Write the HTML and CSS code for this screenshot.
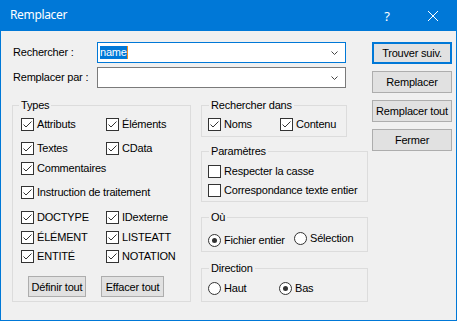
FILE: index.html
```html
<!DOCTYPE html>
<html lang="fr">
<head>
<meta charset="utf-8">
<title>Remplacer</title>
<link rel="stylesheet" href="styles.css">
</head>
<body>
<div class="window">
  <div class="titlebar">
    <div class="title">Remplacer</div>
    <div class="tbtn help">?</div>
    <div class="tbtn close"><svg width="10" height="10" viewBox="0 0 10 10"><path d="M0 0L10 10M10 0L0 10" stroke="#fff" stroke-width="1"/></svg></div>
  </div>
  <div class="content">
    <div class="left">
      <div class="row">
        <span class="lbl">Rechercher :</span>
        <div class="combo focus">
          <span class="value"><span class="sel">name</span><span class="caret"></span></span>
          <svg class="chev" width="7" height="4" viewBox="0 0 7 4"><path d="M0.5 0.5L3.5 3.5L6.5 0.5" fill="none" stroke="#444" stroke-width="1"/></svg>
        </div>
      </div>
      <div class="row">
        <span class="lbl">Remplacer par :</span>
        <div class="combo">
          <span class="value"></span>
          <svg class="chev" width="7" height="4" viewBox="0 0 7 4"><path d="M0.5 0.5L3.5 3.5L6.5 0.5" fill="none" stroke="#444" stroke-width="1"/></svg>
        </div>
      </div>
      <div class="groups">
        <fieldset class="grp types">
          <legend>Types</legend>
          <div class="trow g6">
            <label class="opt"><span class="cb"><svg width="11" height="11" viewBox="0 0 11 11"><path d="M1.5 5.5L4 8L9.5 2.5" fill="none" stroke="#333" stroke-width="1"/></svg></span>Attributs</label>
            <label class="opt"><span class="cb"><svg width="11" height="11" viewBox="0 0 11 11"><path d="M1.5 5.5L4 8L9.5 2.5" fill="none" stroke="#333" stroke-width="1"/></svg></span>Éléments</label>
          </div>
          <div class="trow g11">
            <label class="opt"><span class="cb"><svg width="11" height="11" viewBox="0 0 11 11"><path d="M1.5 5.5L4 8L9.5 2.5" fill="none" stroke="#333" stroke-width="1"/></svg></span>Textes</label>
            <label class="opt"><span class="cb"><svg width="11" height="11" viewBox="0 0 11 11"><path d="M1.5 5.5L4 8L9.5 2.5" fill="none" stroke="#333" stroke-width="1"/></svg></span>CData</label>
          </div>
          <div class="trow g7">
            <label class="opt"><span class="cb"><svg width="11" height="11" viewBox="0 0 11 11"><path d="M1.5 5.5L4 8L9.5 2.5" fill="none" stroke="#333" stroke-width="1"/></svg></span>Commentaires</label>
          </div>
          <div class="trow g11">
            <label class="opt"><span class="cb"><svg width="11" height="11" viewBox="0 0 11 11"><path d="M1.5 5.5L4 8L9.5 2.5" fill="none" stroke="#333" stroke-width="1"/></svg></span>Instruction de traitement</label>
          </div>
          <div class="trow g12">
            <label class="opt"><span class="cb"><svg width="11" height="11" viewBox="0 0 11 11"><path d="M1.5 5.5L4 8L9.5 2.5" fill="none" stroke="#333" stroke-width="1"/></svg></span>DOCTYPE</label>
            <label class="opt"><span class="cb"><svg width="11" height="11" viewBox="0 0 11 11"><path d="M1.5 5.5L4 8L9.5 2.5" fill="none" stroke="#333" stroke-width="1"/></svg></span>IDexterne</label>
          </div>
          <div class="trow g7">
            <label class="opt"><span class="cb"><svg width="11" height="11" viewBox="0 0 11 11"><path d="M1.5 5.5L4 8L9.5 2.5" fill="none" stroke="#333" stroke-width="1"/></svg></span>ÉLÉMENT</label>
            <label class="opt"><span class="cb"><svg width="11" height="11" viewBox="0 0 11 11"><path d="M1.5 5.5L4 8L9.5 2.5" fill="none" stroke="#333" stroke-width="1"/></svg></span>LISTEATT</label>
          </div>
          <div class="trow g6">
            <label class="opt"><span class="cb"><svg width="11" height="11" viewBox="0 0 11 11"><path d="M1.5 5.5L4 8L9.5 2.5" fill="none" stroke="#333" stroke-width="1"/></svg></span>ENTITÉ</label>
            <label class="opt"><span class="cb"><svg width="11" height="11" viewBox="0 0 11 11"><path d="M1.5 5.5L4 8L9.5 2.5" fill="none" stroke="#333" stroke-width="1"/></svg></span>NOTATION</label>
          </div>
          <div class="tbtns">
            <button class="btn small b1">Définir tout</button>
            <button class="btn small b2">Effacer tout</button>
          </div>
        </fieldset>
        <div class="rcol">
          <fieldset class="grp in">
            <legend>Rechercher dans</legend>
            <div class="orow g6 c72">
              <label class="opt"><span class="cb"><svg width="11" height="11" viewBox="0 0 11 11"><path d="M1.5 5.5L4 8L9.5 2.5" fill="none" stroke="#333" stroke-width="1"/></svg></span>Noms</label>
              <label class="opt"><span class="cb"><svg width="11" height="11" viewBox="0 0 11 11"><path d="M1.5 5.5L4 8L9.5 2.5" fill="none" stroke="#333" stroke-width="1"/></svg></span>Contenu</label>
            </div>
          </fieldset>
          <fieldset class="grp params">
            <legend>Paramètres</legend>
            <div class="orow g7">
              <label class="opt"><span class="cb"></span>Respecter la casse</label>
            </div>
            <div class="orow g6">
              <label class="opt"><span class="cb"></span>Correspondance texte entier</label>
            </div>
          </fieldset>
          <fieldset class="grp where">
            <legend>Où</legend>
            <div class="orow g8 c86 top">
              <label class="opt low"><span class="rb on"></span>Fichier entier</label>
              <label class="opt"><span class="rb"></span>Sélection</label>
            </div>
          </fieldset>
          <fieldset class="grp dir">
            <legend>Direction</legend>
            <div class="orow g7 c71">
              <label class="opt"><span class="rb"></span>Haut</label>
              <label class="opt"><span class="rb on"></span>Bas</label>
            </div>
          </fieldset>
        </div>
      </div>
    </div>
    <div class="actions">
      <button class="btn act default">Trouver suiv.</button>
      <button class="btn act">Remplacer</button>
      <button class="btn act">Remplacer tout</button>
      <button class="btn act">Fermer</button>
    </div>
  </div>
</div>
</body>
</html>
```

FILE: styles.css
```css
* { box-sizing: border-box; }
html, body { margin: 0; padding: 0; background: #f0f0f0; }
body { font-family: "Liberation Sans", Arial, sans-serif; font-size: 11px; letter-spacing: -0.2px; color: #000; }

.window { width: 457px; height: 321px; border: 1px solid #0078d7; border-top: 0; background: #f0f0f0; display: flex; flex-direction: column; overflow: hidden; }

.titlebar { height: 31px; flex: none; background: #0078d7; color: #fff; display: flex; font-family: "Noto Sans", "Segoe UI", sans-serif; letter-spacing: 0; }
.title { flex: 1; padding: 7px 0 0 9px; font-size: 12px; line-height: 16px; letter-spacing: -0.35px; }
.tbtn { width: 46px; height: 31px; display: flex; align-items: center; justify-content: center; }
.help { font-size: 13px; line-height: 16px; padding-top: 0; }

.content { display: flex; padding: 11px 0 0 11px; }
.left { width: 356px; flex: none; }

.row { display: flex; align-items: center; height: 21px; }
.row + .row { margin-top: 4px; }
.lbl { width: 85px; padding-left: 1px; line-height: 13px; }
.combo { width: 249px; height: 21px; border: 1px solid #7a7a7a; background: #fff; display: flex; align-items: center; }
.combo.focus { border-color: #0078d7; }
.value { flex: 1; padding-left: 2px; display: flex; align-items: center; height: 13px; }
.sel { background: #0078d7; color: #fff; line-height: 13px; }
.caret { width: 1px; height: 13px; background: #f08a1c; }
.chev { display: block; margin-right: 7px; }

.groups { display: flex; margin-top: 11px; gap: 10px; }
fieldset.grp { margin: 0; border: 1px solid #dcdcdc; min-width: 0; }
.grp legend { padding: 0 2px; font-size: 11px; line-height: 13px; }

.types { width: 179px; padding: 0 0 4px 8px; }
.types legend { margin-left: -2px; }

.rcol { width: 167px; display: flex; flex-direction: column; align-items: flex-start; }
.rcol .grp { width: 167px; padding: 0 0 4px 6px; }
.rcol legend { margin-left: 1px; }
.rcol .in { width: 146px; padding-bottom: 5px; }
.rcol .params { margin-top: 8px; }
.rcol .where { margin-top: 9px; }
.rcol .dir { margin-top: 10px; padding-bottom: 6px; }

.trow { display: grid; grid-template-columns: 85px auto; }
.orow { display: grid; grid-template-columns: auto; }
.orow.c72 { grid-template-columns: 72px auto; }
.orow.c86 { grid-template-columns: 86px auto; }
.orow.c71 { grid-template-columns: 71px auto; }
.orow.top { align-items: start; }
.opt.low { margin-top: 2px; }

.g6 { margin-top: 6px; }
.g7 { margin-top: 7px; }
.g8 { margin-top: 8px; }
.g11 { margin-top: 11px; }
.g12 { margin-top: 12px; }

.opt { display: flex; align-items: center; gap: 3px; height: 13px; line-height: 13px; white-space: nowrap; }
.cb { width: 13px; height: 13px; border: 1px solid #333; background: #fff; flex: none; display: block; }
.cb svg { display: block; }
.rb { width: 13px; height: 13px; border: 1px solid #333; border-radius: 50%; background: #fff; flex: none; display: flex; align-items: center; justify-content: center; }
.rb.on::after { content: ""; width: 5px; height: 5px; border-radius: 50%; background: #333; }

.btn { font: inherit; letter-spacing: inherit; color: #000; background: #e1e1e1; border: 1px solid #adadad; padding: 0; margin: 0; text-align: center; white-space: nowrap; }
.tbtns { display: flex; margin-top: 13px; padding-left: 7px; gap: 15px; }
.btn.small { height: 21px; }
.btn.b1 { width: 58px; }
.btn.b2 { width: 63px; }

.actions { display: flex; flex-direction: column; margin-left: 4px; gap: 7px; }
.btn.act { width: 80px; height: 22px; }
.btn.default { border: 2px solid #0078d7; }
```
